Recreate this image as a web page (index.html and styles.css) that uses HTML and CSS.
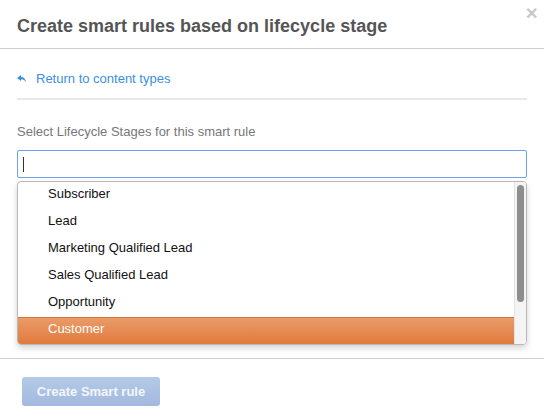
FILE: index.html
```html
<!DOCTYPE html>
<html>
<head>
    <title>Smart rules</title>
    <link rel="stylesheet" href="styles.css">
</head>
<body>
<div class="modal">
    <div class="modal-header">
        <h1>Create smart rules based on lifecycle stage</h1>
        <span class="close">&#x2715;</span>
    </div>

    <div class="modal-body">
        <a class="back-link" href="#">
            <svg width="9" height="7" viewBox="0 0 9 7"><path d="M0 3 L4 0 V2 C7 2 8.5 4 9 7 C7.5 4.8 6 4.2 4 4.2 V6 Z" fill="#3d8fe0"/></svg>
            <span>Return to content types</span>
        </a>
        <div class="divider"></div>

        <label class="field-label" for="stage-input">Select Lifecycle Stages for this smart rule</label>
        <div class="stage-input" id="stage-input"><span class="caret"></span></div>

        <div class="dropdown">
            <ul class="options">
                <li>Subscriber</li>
                <li>Lead</li>
                <li>Marketing Qualified Lead</li>
                <li>Sales Qualified Lead</li>
                <li>Opportunity</li>
                <li class="active">Customer</li>
            </ul>
            <div class="scroll-track"><div class="scroll-thumb"></div></div>
        </div>
    </div>

    <div class="modal-footer">
        <button class="create-btn" disabled>Create Smart rule</button>
    </div>
</div>
</body>
</html>
```

FILE: styles.css
```css
body {
    font-family: "Liberation Sans", Arial, sans-serif;
    margin: 0;
    padding: 0;
    background-color: #ffffff;
    color: #222;
}
.modal {
    width: 544px;
    height: 420px;
    position: relative;
    overflow: hidden;
}
.modal-header {
    height: 48px;
    border-bottom: 1px solid #cfcfcf;
    padding: 0 17px;
    display: flex;
    align-items: center;
}
.modal-header h1 {
    margin: 0;
    margin-top: 4px;
    font-size: 18px;
    font-weight: bold;
    color: #555;
}
.close {
    position: absolute;
    top: 4px;
    right: 6px;
    font-size: 16px;
    font-weight: bold;
    color: #c8c8c8;
}
.modal-body {
    padding: 0 17px;
}
.back-link {
    display: flex;
    align-items: center;
    gap: 10px;
    margin-top: 21px;
    height: 16px;
    font-size: 13px;
    color: #3d8fe0;
    text-decoration: none;
}
.divider {
    height: 2px;
    background-color: #e8e8e8;
    margin-top: 12px;
}
.field-label {
    display: block;
    margin-top: 24px;
    font-size: 13px;
    color: #777;
    line-height: 16px;
}
.stage-input {
    margin-top: 10px;
    height: 26px;
    border: 1px solid #6ea2ee;
    border-radius: 2px;
    display: flex;
    align-items: center;
    padding-left: 5px;
}
.caret {
    width: 1px;
    height: 15px;
    background-color: #333;
}
.dropdown {
    margin-top: 3px;
    height: 162px;
    border: 1px solid #b8b8b8;
    border-radius: 4px;
    box-shadow: 0px 3px 6px rgba(0, 0, 0, 0.18);
    display: flex;
    overflow: hidden;
}
.options {
    list-style: none;
    margin: 0;
    padding: 0;
    flex: 1;
}
.options li {
    height: 27px;
    line-height: 23px;
    padding-left: 30px;
    font-size: 13px;
    color: #111;
}
.options li.active {
    background: linear-gradient(#eb9b69, #e07a3d);
    border-top: 1px solid #d8733a;
    height: 26px;
    line-height: 22px;
    color: #fff;
}
.scroll-track {
    width: 12px;
    background-color: #f4f4f4;
    border-left: 1px solid #e2e2e2;
    padding: 3px 0 0 2px;
    box-sizing: border-box;
}
.scroll-thumb {
    width: 7px;
    height: 117px;
    border-radius: 4px;
    background-color: #8e8e8e;
}
.modal-footer {
    position: absolute;
    top: 358px;
    left: 0;
    right: 0;
    border-top: 1px solid #cfcfcf;
    padding: 18px 22px;
}
.create-btn {
    width: 138px;
    height: 29px;
    border: none;
    border-radius: 3px;
    background: linear-gradient(#b3cbe6, #a3b8df);
    color: #f2f6fb;
    font-family: "Liberation Sans", Arial, sans-serif;
    font-size: 13px;
    font-weight: bold;
}
```
